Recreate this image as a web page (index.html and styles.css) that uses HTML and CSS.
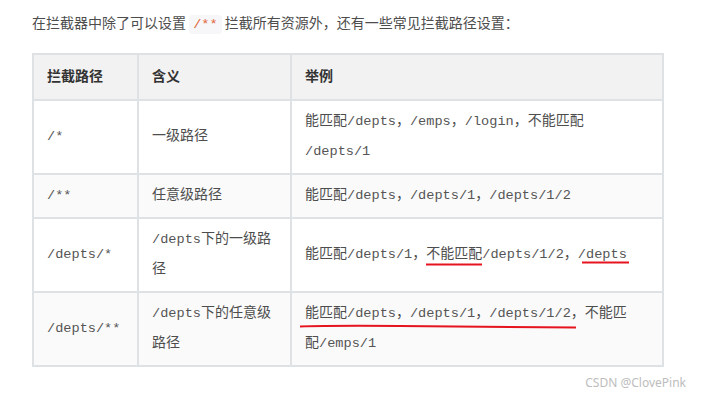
FILE: index.html
```html
<!DOCTYPE html>
<html lang="zh-CN">
<head>
<meta charset="utf-8">
<title>拦截路径</title>
<link rel="stylesheet" href="styles.css">
</head>
<body>
<div class="page">
  <p class="intro">在拦截器中除了可以设置 <code class="inline">/**</code> 拦截所有资源外，还有一些常见拦截路径设置：</p>
  <table class="grid">
    <colgroup>
      <col class="c1"><col class="c2"><col class="c3">
    </colgroup>
    <thead>
      <tr><th>拦截路径</th><th>含义</th><th>举例</th></tr>
    </thead>
    <tbody>
      <tr>
        <td><code>/*</code></td>
        <td>一级路径</td>
        <td>能匹配<code>/depts</code>，<code>/emps</code>，<code>/login</code>，不能匹配 <code>/depts/1</code></td>
      </tr>
      <tr>
        <td><code>/**</code></td>
        <td>任意级路径</td>
        <td>能匹配<code>/depts</code>，<code>/depts/1</code>，<code>/depts/1/2</code></td>
      </tr>
      <tr>
        <td><code>/depts/*</code></td>
        <td><code>/depts</code>下的一级路径</td>
        <td>能匹配<code>/depts/1</code>，不能匹配<code>/depts/1/2</code>，<code>/depts</code></td>
      </tr>
      <tr>
        <td><code>/depts/**</code></td>
        <td><code>/depts</code>下的任意级路径</td>
        <td>能匹配<code>/depts</code>，<code>/depts/1</code>，<code>/depts/1/2</code>，不能匹配<code>/emps/1</code></td>
      </tr>
    </tbody>
  </table>
  <div class="watermark">CSDN @ClovePink</div>
  <svg class="marks" width="702" height="395" viewBox="0 0 702 395">
    <path d="M426 264.5 L482 264.5" stroke="#e5141e" stroke-width="2" fill="none"/>
    <path d="M582 262.5 L629 262.5" stroke="#e5141e" stroke-width="2" fill="none"/>
    <path d="M300 326.5 Q330 325.5 400 326 T576 327.5" stroke="#e5141e" stroke-width="2" fill="none"/>
  </svg>
</div>
</body>
</html>
```
FILE: styles.css
```css
html, body {
  margin: 0;
  padding: 0;
  background: #fff;
}
.page {
  position: relative;
  width: 702px;
  height: 395px;
  padding: 10px 0 0 32px;
  box-sizing: border-box;
  font-family: "Noto Sans CJK SC", "Noto Sans", sans-serif;
  font-size: 14px;
  color: #4d4d4d;
}
.intro {
  margin: 0 0 19px;
  line-height: 24px;
}
code {
  font-family: "Liberation Mono", "DejaVu Sans Mono", monospace;
  font-size: 13.6px;
  line-height: 1;
  color: #555;
}
code.inline {
  background: #f7f7f9;
  color: #e0663a;
  padding: 2px 4px;
  border-radius: 3px;
}
.grid {
  border-collapse: collapse;
  table-layout: fixed;
  width: 630px;
  border: 2px solid #dfe2e5;
}
.c1 { width: 105px; }
.c2 { width: 153px; }
.c3 { width: 372px; }
.grid th, .grid td {
  border: 2px solid #dfe2e5;
  text-align: left;
  line-height: 30px;
  padding: 3px 13px 9px;
  vertical-align: middle;
}
.grid th {
  background: #f2f2f2;
  color: #333;
  font-weight: bold;
  padding: 5px 13px 9px;
}
.grid tbody tr:nth-child(odd) td { background: #fff; }
.grid tbody tr:nth-child(even) td { background: #fafafa; }
.watermark {
  position: absolute;
  right: 16px;
  top: 374px;
  font-family: "Noto Sans", sans-serif;
  font-size: 12px;
  color: #bdbdbd;
}
.marks {
  position: absolute;
  left: 0;
  top: 0;
  pointer-events: none;
}
```
